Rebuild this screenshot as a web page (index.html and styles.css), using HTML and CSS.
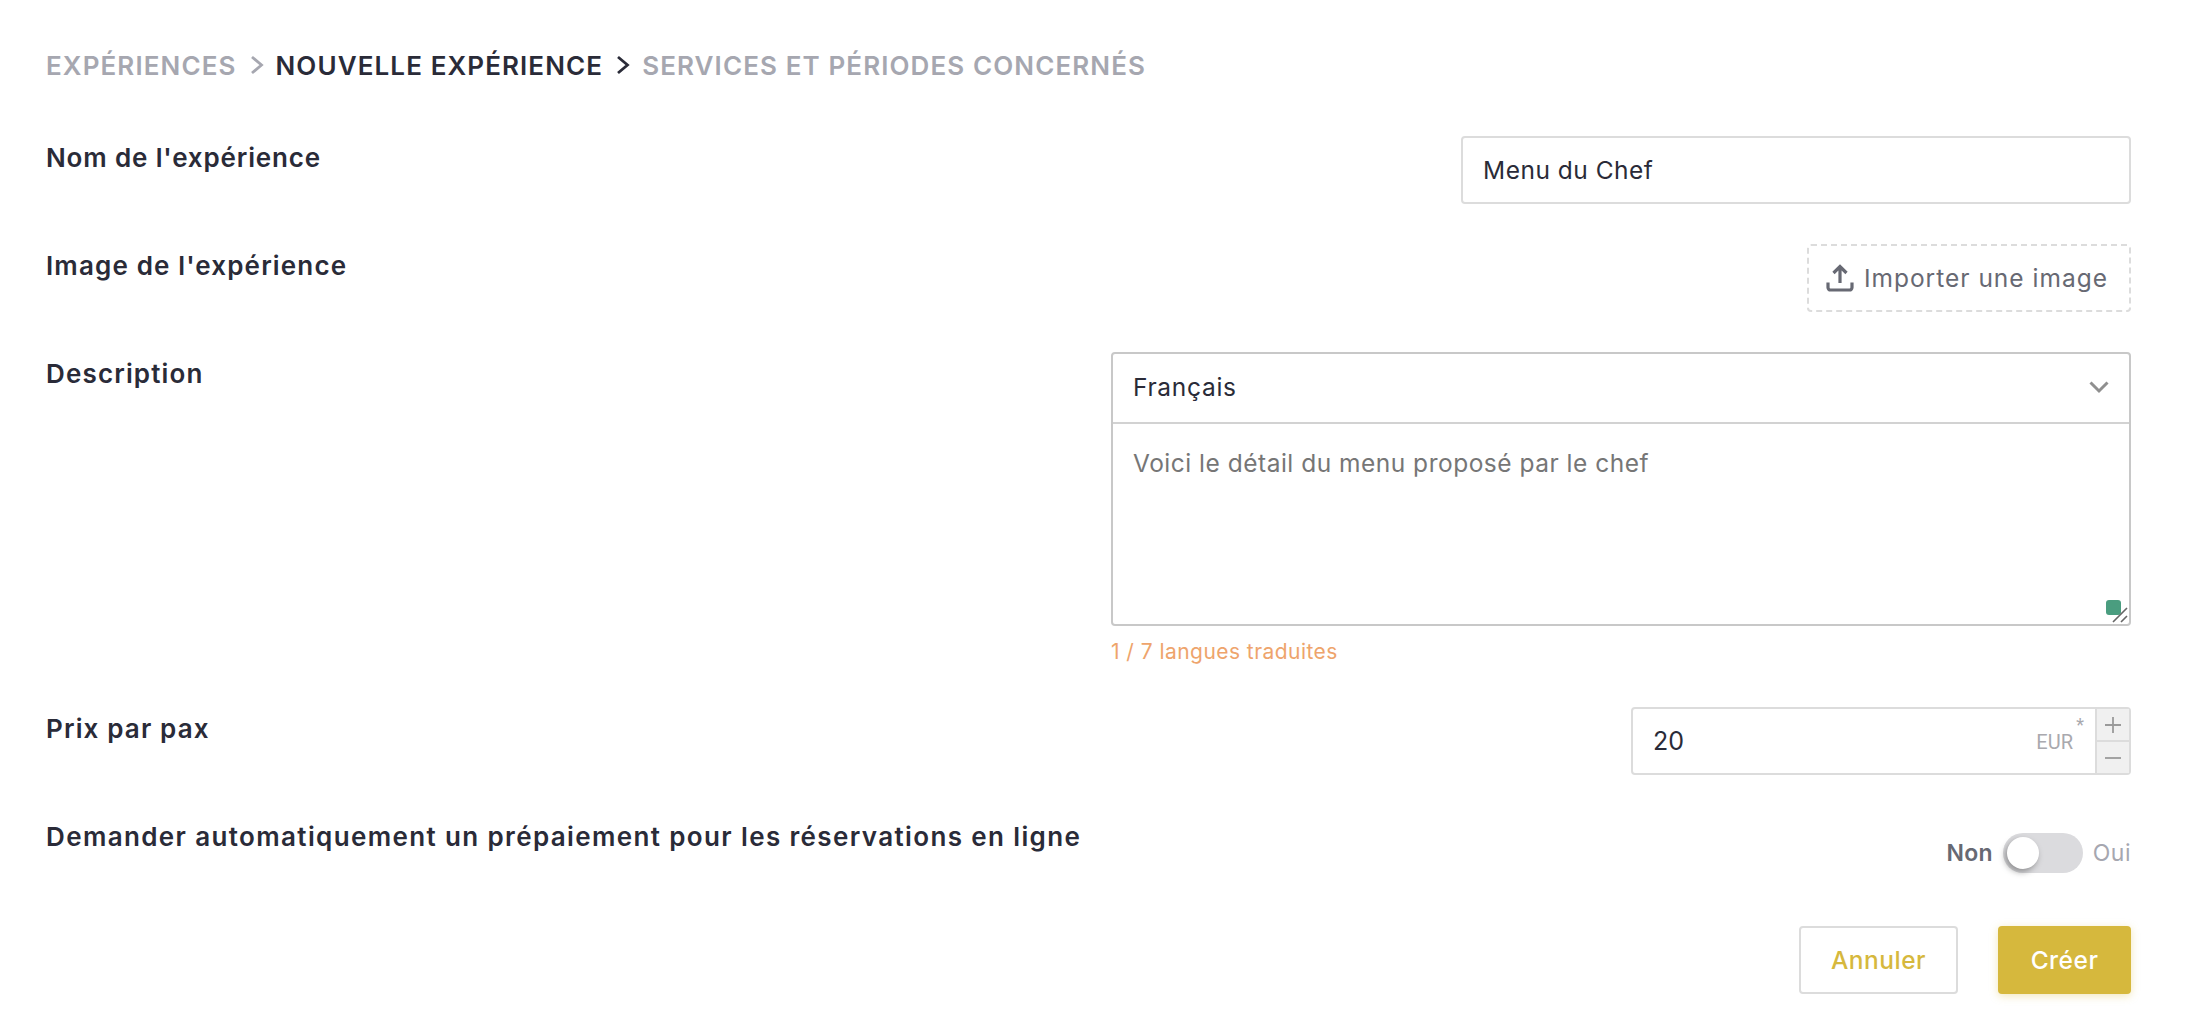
FILE: index.html
```html
<!DOCTYPE html>
<html lang="fr">
<head>
<meta charset="utf-8">
<title>Nouvelle expérience</title>
<link rel="stylesheet" href="styles.css">
</head>
<body>
<main class="page">
  <nav class="crumbs">
    <span class="crumb muted">EXPÉRIENCES</span>
    <svg class="crumb-sep sep-muted" viewBox="0 0 14 20"><path d="M2 2l9.500 8-9.500 8"/></svg>
    <span class="crumb">NOUVELLE EXPÉRIENCE</span>
    <svg class="crumb-sep" viewBox="0 0 14 20"><path d="M2 2l9.500 8-9.500 8"/></svg>
    <span class="crumb muted">SERVICES ET PÉRIODES CONCERNÉS</span>
  </nav>

  <section class="row">
    <div class="label label-tight">Nom de l'expérience</div>
    <div class="field text-input">Menu du Chef</div>
  </section>

  <section class="row">
    <div class="label">Image de l'expérience</div>
    <div class="upload">
      <svg class="upload-icon" viewBox="0 0 28 28"><path d="M14 19V3M7.500 9L14 2.500 20.500 9M2 18.500v5a2.500 2.500 0 0 0 2.500 2.500h19a2.500 2.500 0 0 0 2.500-2.500v-5"/></svg>
      <span>Importer une image</span>
    </div>
  </section>

  <section class="row">
    <div class="label">Description</div>
    <div class="desc-col">
      <div class="desc-box">
        <div class="select">
          <span>Français</span>
          <svg class="chevron" viewBox="0 0 20 14"><path d="M1.500 2.500l8.500 8.500 8.500-8.500"/></svg>
        </div>
        <div class="textarea">
          Voici le détail du menu proposé par le chef
          <span class="widget"></span>
          <svg class="resizer" viewBox="0 0 16 16"><path d="M1 15L15 1M9 15l6-6"/></svg>
        </div>
      </div>
      <div class="hint">1 / 7 langues traduites</div>
    </div>
  </section>

  <section class="row">
    <div class="label">Prix par pax</div>
    <div class="price">
      <div class="price-main">
        <span class="price-value">20</span>
        <span class="unit">EUR</span>
        <span class="req">*</span>
      </div>
      <div class="stepper">
        <div class="step"><svg viewBox="0 0 18 18"><path d="M9 1v16M1 9h16"/></svg></div>
        <div class="step"><svg viewBox="0 0 18 18"><path d="M1 9h16"/></svg></div>
      </div>
    </div>
  </section>

  <section class="row row-toggle">
    <div class="label label-wide">Demander automatiquement un prépaiement pour les réservations en ligne</div>
    <div class="toggle-wrap">
      <span class="toggle-on">Non</span>
      <span class="toggle"><span class="knob"></span></span>
      <span class="toggle-off">Oui</span>
    </div>
  </section>

  <footer class="actions">
    <div class="btn btn-ghost">Annuler</div>
    <div class="btn btn-primary">Créer</div>
  </footer>
</main>
</body>
</html>
```

FILE: styles.css
```css
* { box-sizing: border-box; }
html, body { margin: 0; height: 100%; background: #fff; }
body {
  font-family: Inter, "Liberation Sans", sans-serif;
  color: #2a2b38;
  font-size: 24.500px;
  letter-spacing: .5px;
}
.page {
  padding: 44px 61px 0 46px;
}
.crumbs {
  display: flex;
  align-items: center;
  height: 42px;
  margin-bottom: 50px;
  font-size: 26px;
  font-weight: 600;
  letter-spacing: 1.100px;
}
.crumb { white-space: nowrap; }
.muted { color: #a6a7b0; }
.crumb-sep {
  width: 14px;
  height: 20px;
  margin: 0 12px 0 13px;
  fill: none;
  stroke: #2a2b38;
  stroke-width: 2.800;
}
.sep-muted { stroke: #a6a7b0; }
.row {
  display: flex;
  justify-content: space-between;
  align-items: flex-start;
  margin-bottom: 40px;
}
.label {
  line-height: 44px;
  font-size: 26px;
  font-weight: 600;
  letter-spacing: 1.150px;
  white-space: nowrap;
}
.label-tight { letter-spacing: .850px; }
.label-wide { letter-spacing: 1.370px; }
.field, .upload, .price { height: 68px; }
.text-input {
  width: 670px;
  display: flex;
  align-items: center;
  padding: 0 20px;
  border: 2px solid #dcdcdc;
  border-radius: 4px;
}
.upload {
  width: 324px;
  display: flex;
  align-items: center;
  justify-content: flex-end;
  gap: 10px;
  padding-right: 21px;
  border: 2px dashed #dcdcdc;
  border-radius: 4px;
  color: #676973;
  letter-spacing: 1px;
}
.upload-icon {
  width: 28px;
  height: 28px;
  fill: none;
  stroke: #676973;
  stroke-width: 3.200;
}
.desc-col { width: 1020px; }
.desc-box {
  height: 274px;
  border: 2px solid #c8c8c8;
  border-radius: 4px;
  display: flex;
  flex-direction: column;
}
.select {
  height: 70px;
  flex: none;
  display: flex;
  align-items: center;
  justify-content: space-between;
  padding: 0 20px 2px 20px;
  border-bottom: 2px solid #d2d2d2;
  letter-spacing: .7px;
}
.chevron {
  width: 20px;
  height: 14px;
  fill: none;
  stroke: #8f8f8f;
  stroke-width: 3;
}
.textarea {
  flex: 1;
  position: relative;
  padding: 24px 20px;
  color: #767676;
  line-height: 30px;
}
.widget {
  position: absolute;
  right: 8px;
  bottom: 9px;
  width: 15px;
  height: 15px;
  border-radius: 3px;
  background: #4a9d7f;
}
.resizer {
  position: absolute;
  right: 1px;
  bottom: 1px;
  width: 16px;
  height: 16px;
  fill: none;
  stroke: #666;
  stroke-width: 1.600;
}
.hint {
  margin: 13px 0 2px;
  font-size: 21px;
  letter-spacing: .450px;
  line-height: 26px;
  color: #eea46c;
}
.price {
  width: 500px;
  display: flex;
  border: 2px solid #dcdcdc;
  border-radius: 4px;
}
.price-main {
  flex: 1;
  position: relative;
  display: flex;
  align-items: center;
  justify-content: space-between;
  padding: 0 22px 0 20px;
}
.price-value { font-size: 25px; letter-spacing: 0; }
.unit {
  font-family: Roboto, sans-serif;
  font-size: 20px;
  letter-spacing: 0;
  color: #a9a9ae;
  margin-top: 2px;
}
.req {
  position: absolute;
  top: 5px;
  right: 11px;
  font-family: Roboto, sans-serif;
  font-size: 18px;
  letter-spacing: 0;
  color: #a9a9ae;
}
.stepper {
  width: 34px;
  flex: none;
  display: flex;
  flex-direction: column;
  border-left: 2px solid #dcdcdc;
}
.step {
  flex: 1;
  display: flex;
  align-items: center;
  justify-content: center;
  background: #f0f0f0;
}
.step + .step { border-top: 2px solid #dcdcdc; }
.step svg {
  width: 18px;
  height: 18px;
  fill: none;
  stroke: #9a9a9a;
  stroke-width: 1.800;
}
.row-toggle { margin-bottom: 40px; height: 71px; }
.toggle-wrap {
  display: flex;
  align-items: center;
  gap: 10px;
  margin-top: 18px;
  font-size: 23px;
}
.toggle-on { font-weight: 600; color: #676973; letter-spacing: .2px; }
.toggle-off { color: #a6a7b0; }
.toggle {
  width: 80px;
  height: 40px;
  padding: 4px;
  border-radius: 20px;
  background: #dbdbde;
  display: block;
}
.knob {
  display: block;
  width: 32px;
  height: 32px;
  border-radius: 50%;
  background: #fff;
  box-shadow: -2px 3px 6px rgba(0, 0, 0, .35);
}
.actions {
  display: flex;
  justify-content: flex-end;
  gap: 40px;
}
.btn {
  height: 68px;
  display: flex;
  align-items: center;
  justify-content: center;
  border-radius: 4px;
  font-weight: 500;
}
.btn-ghost {
  width: 159px;
  border: 2px solid #dcdcdc;
  color: #d6b83d;
}
.btn-primary {
  width: 133px;
  background: #d6b83d;
  color: #fff;
  box-shadow: 0 2px 8px rgba(214, 184, 61, .35);
}
```
